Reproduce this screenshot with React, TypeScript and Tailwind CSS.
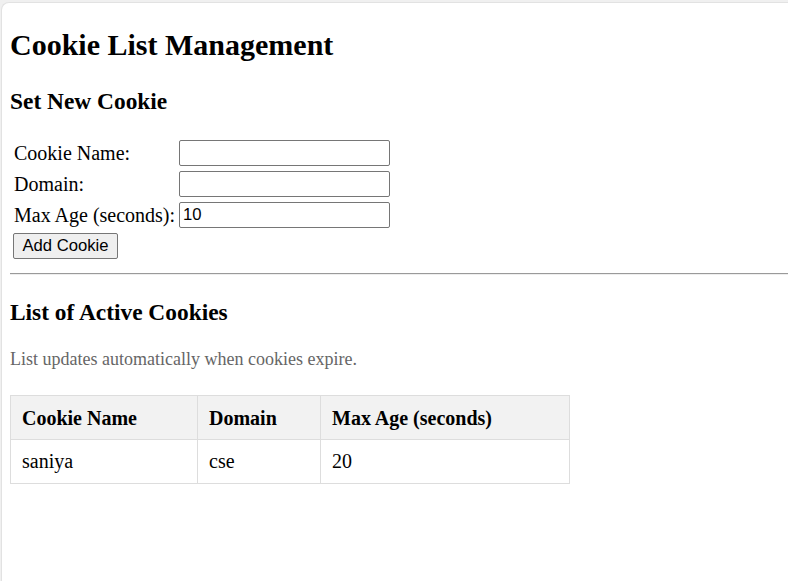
import React from 'react';

type CookieRow = { name: string; domain: string; maxAge: number };

const cookies: CookieRow[] = [{ name: 'saniya', domain: 'cse', maxAge: 20 }];

function FormRow({ label, value }: { label: string; value?: string }) {
  return (
    <>
      <label className="flex items-center text-[20px] leading-[23px]">{label}</label>
      <input
        type="text"
        defaultValue={value}
        className="w-[211px] h-[26px] border border-[#767676] rounded-[2px] px-[3px] text-[16.67px] font-['Liberation_Sans',Arial,sans-serif] text-black outline-none"
      />
    </>
  );
}

export default function App() {
  return (
    <div className="min-h-screen bg-[#f0f0f0] pt-[2px] pl-[1px] overflow-hidden">
      <div className="min-h-[579px] bg-white rounded-tl-[8px] border-t border-l border-[#e2e2e2] pl-[8px] font-['Liberation_Serif','Times_New_Roman',serif] text-black">
        <h1 className="mt-[25px] text-[30px] leading-[34px] font-bold">Cookie List Management</h1>

        <h3 className="mt-[26px] text-[23.4px] leading-[27px] font-bold">Set New Cookie</h3>

        {/* form */}
        <div className="mt-[25px] pl-[4px] grid grid-cols-[165px_211px] gap-y-[5px]">
          <FormRow label="Cookie Name:" />
          <FormRow label="Domain:" />
          <FormRow label="Max Age (seconds):" value="10" />
          <div className="col-span-2 -ml-[1px]">
            <button className="h-[26px] w-[105px] bg-[#efefef] border border-[#767676] rounded-[2px] text-[16.67px] leading-[20px] font-['Liberation_Sans',Arial,sans-serif] text-black">
              Add Cookie
            </button>
          </div>
        </div>

        <div className="mt-[14px] border-t border-b border-t-[#9a9a9a] border-b-[#eeeeee]" />

        <h3 className="mt-[24px] text-[23.4px] leading-[27px] font-bold">List of Active Cookies</h3>

        <p className="mt-[23px] text-[18px] leading-[21px] text-[#666666]">
          List updates automatically when cookies expire.
        </p>

        <table className="mt-[25px] w-[560px] border-collapse text-[20px] leading-[23px]">
          <thead>
            <tr className="bg-[#f2f2f2]">
              <th className="w-[187px] border border-[#dddddd] pl-[11px] pr-[10px] pt-[11px] pb-[9px] text-left font-bold">Cookie Name</th>
              <th className="w-[123px] border border-[#dddddd] pl-[11px] pr-[10px] pt-[11px] pb-[9px] text-left font-bold">Domain</th>
              <th className="border border-[#dddddd] pl-[11px] pr-[10px] pt-[11px] pb-[9px] text-left font-bold">Max Age (seconds)</th>
            </tr>
          </thead>
          <tbody>
            {cookies.map(c => (
              <tr key={c.name}>
                <td className="border border-[#dddddd] pl-[11px] pr-[10px] py-[10px]">{c.name}</td>
                <td className="border border-[#dddddd] pl-[11px] pr-[10px] py-[10px]">{c.domain}</td>
                <td className="border border-[#dddddd] pl-[11px] pr-[10px] py-[10px]">{c.maxAge}</td>
              </tr>
            ))}
          </tbody>
        </table>
      </div>
    </div>
  );
}
